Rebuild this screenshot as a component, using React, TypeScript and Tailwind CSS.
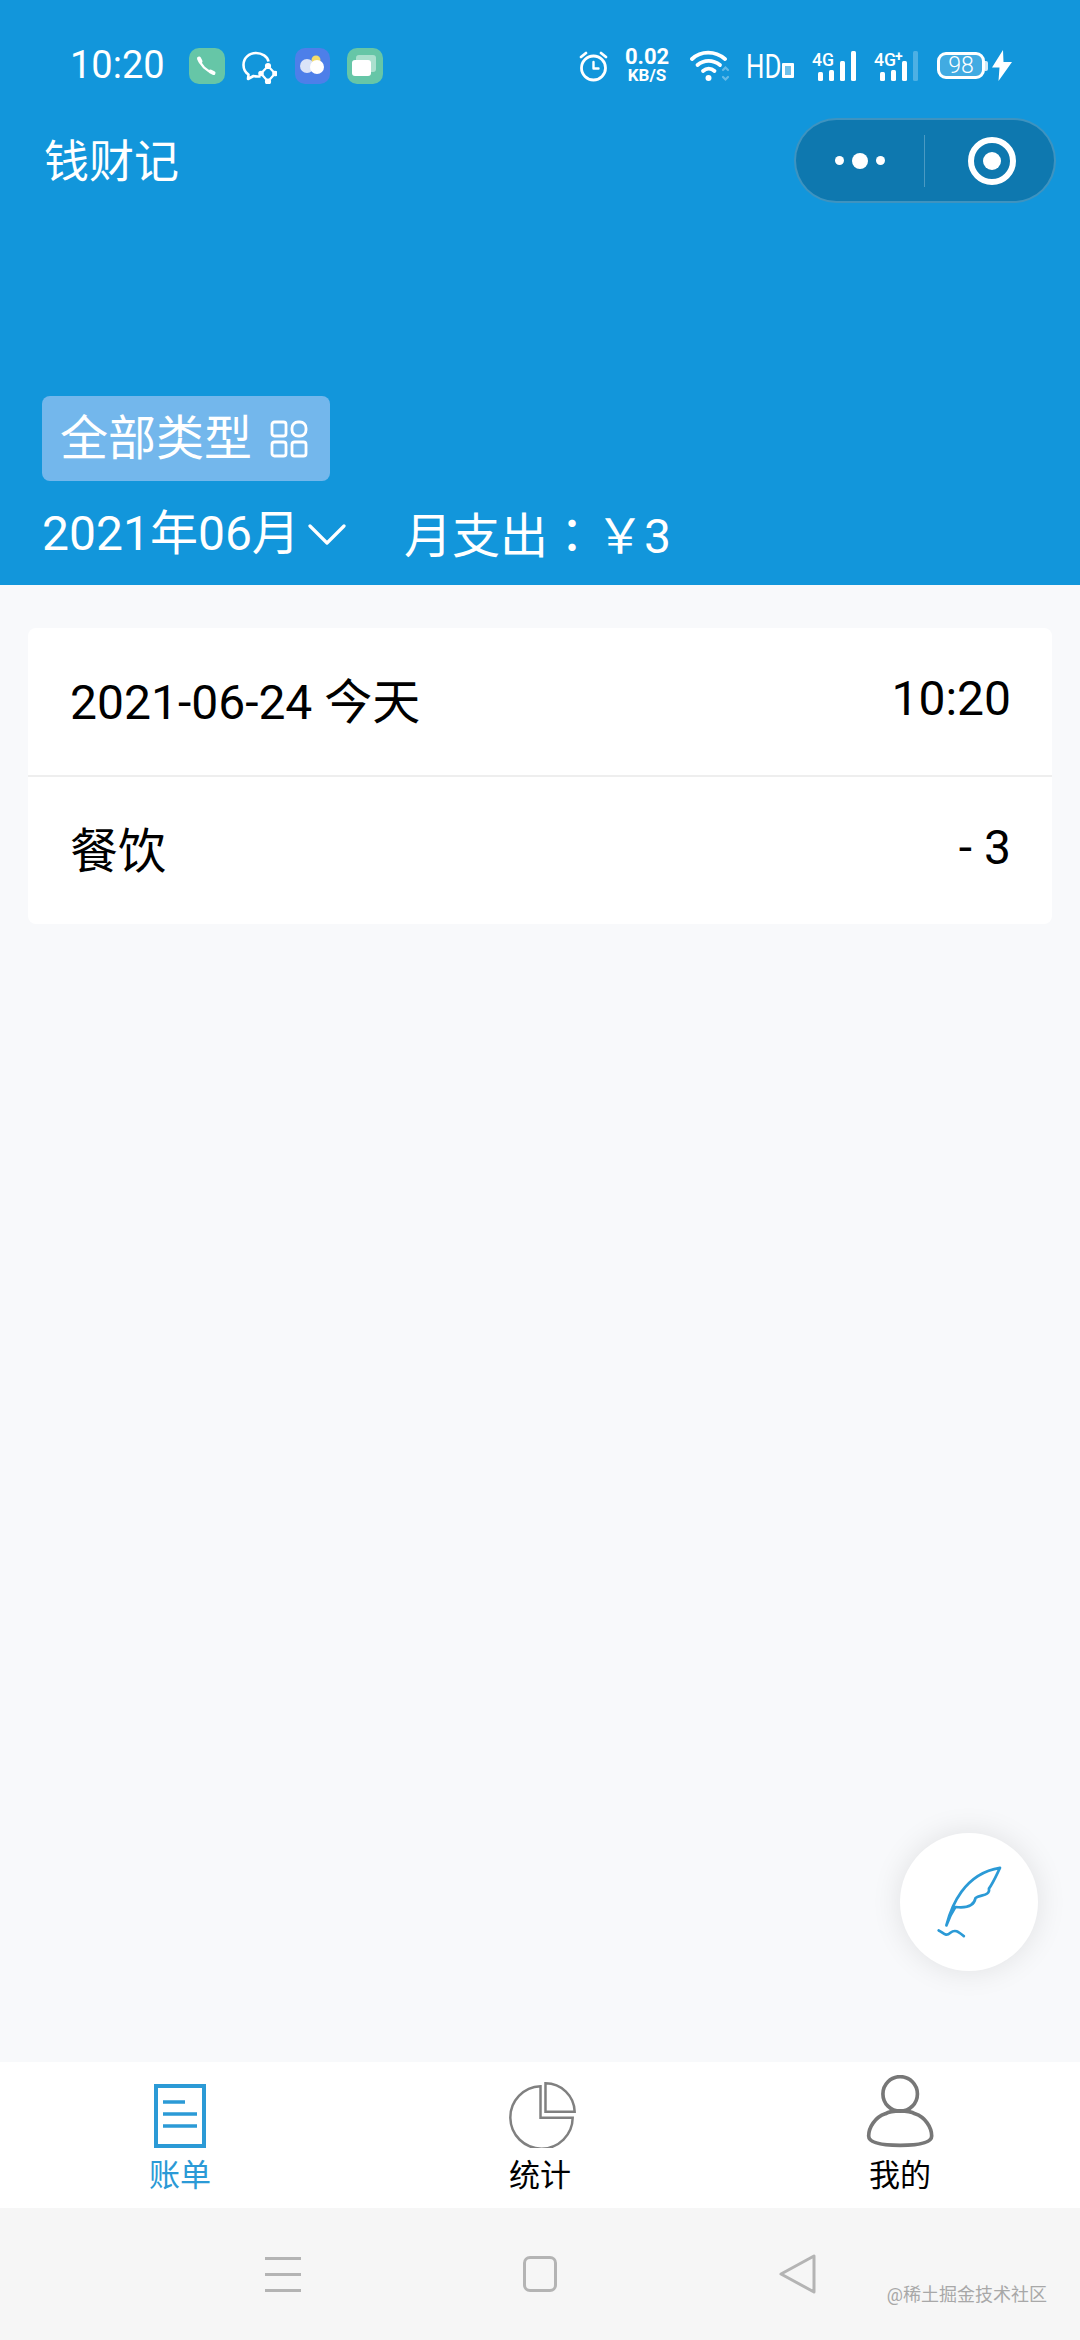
import React from "react";

function Signal({ plus }: { plus?: boolean }) {
  return (
    <svg className="-mt-[6px]" width="46" height="38" viewBox="0 -6 46 38" fill="#fff">
      <text x="0" y="16" fontSize="19" fontWeight="500" fontFamily="Roboto" textLength={22} lengthAdjust="spacingAndGlyphs">4G</text>
      {plus && <text x="21" y="11" fontSize="14" fontWeight="700" fontFamily="Roboto">+</text>}
      <rect x="6" y="22" width="5" height="9" rx="1.5" />
      <rect x="17" y="20" width="5" height="11" rx="1.5" />
      <rect x="28" y="11" width="5" height="20" rx="1.5" />
      <rect x="39" y="1" width="5" height="30" rx="1.5" fillOpacity={plus ? 0.25 : 1} />
    </svg>
  );
}

function StatusBar() {
  return (
    <div className="flex h-[35px] items-center justify-between pl-[70px] pr-[68px] mt-[48px] text-white">
      <div className="flex items-center">
        <span className="text-[38px] leading-[35px] w-[93px] font-normal">10:20</span>
        <div className="ml-[26px] w-[36px] h-[36px] rounded-[10px] bg-[#66c6a7] flex items-center justify-center">
          <svg width="36" height="36" viewBox="0 0 36 36" fill="none" stroke="#fff" strokeLinecap="round">
            <path d="M10.5 11.500C11.500 17 17 23 24 24.500" strokeWidth="2.400" />
            <path d="M10 10.500l1.500 3M21.500 23.500l3 1.500" strokeWidth="4" />
          </svg>
        </div>
        <svg className="ml-[17px]" width="35" height="36" viewBox="0 0 35 36" fill="none" stroke="#fff" strokeWidth="2.600" strokeLinejoin="round">
          <path d="M26.500 13.500C25.500 8.500 20 5 14 5 7 5 1.500 10 1.500 17c0 4 2 7.500 5 9.500L6 31l5.500-3c2 .5 4.500.7 7 .2" />
          <path d="M26 18l7 7.500-7 8-7-8z" strokeWidth="2.200" />
          <circle cx="26" cy="18" r="1.800" fill="#fff" />
          <circle cx="33" cy="25.500" r="1.500" fill="#fff" />
          <circle cx="26" cy="33.500" r="1.800" fill="#fff" />
          <circle cx="19" cy="25.500" r="1.500" fill="#fff" />
        </svg>
        <div className="ml-[18px] w-[35px] h-[36px] rounded-[10px] bg-[#4d7fe9] flex items-center justify-center">
          <svg width="35" height="36" viewBox="0 0 35 36">
            <circle cx="21" cy="12" r="4.500" fill="#f4dc6b" />
            <circle cx="12" cy="18" r="7" fill="#dbe4f8" />
            <circle cx="22" cy="19" r="7" fill="#fff" />
          </svg>
        </div>
        <div className="ml-[17px] w-[36px] h-[36px] rounded-[10px] bg-[#66c6a7] flex items-center justify-center">
          <svg width="36" height="36" viewBox="0 0 36 36" fill="#fff">
            <rect x="9" y="7" width="20" height="17" rx="3" fillOpacity="0.45" />
            <rect x="5" y="12" width="19" height="16" rx="3" />
          </svg>
        </div>
      </div>
      <div className="flex items-center">
        <svg width="29" height="32" viewBox="0 0 29 32" fill="none" stroke="#fff" strokeWidth="2.800" strokeLinecap="round" strokeLinejoin="round">
          <circle cx="14.500" cy="18" r="12" />
          <path d="M14.500 12v6.500h5" strokeWidth="2.400" />
          <path d="M2 7l5-4M27 7l-5-4" />
        </svg>
        <div className="ml-[15px] w-[48px] flex flex-col items-center font-bold">
          <span className="text-[22px] leading-[20px]">0.02</span>
          <span className="text-[17px] leading-[17px]">KB/S</span>
        </div>
        <svg className="ml-[19px]" width="40" height="34" viewBox="0 0 40 34" fill="none" stroke="#fff" strokeWidth="3.800" strokeLinecap="round">
          <path d="M2 10C11 1.500 25 1.500 35 10" />
          <path d="M7.500 16C14 10.500 23 10.500 30 16" />
          <path d="M13 22c3.500-3 8-3 11.500 0" />
          <circle cx="18.500" cy="29" r="3" fill="#fff" stroke="none" />
          <path d="M33 21l2.500-2.500L38 21M33 28l2.500 2.500L38 28" stroke="#fff" strokeOpacity="0.35" strokeWidth="2.200" />
        </svg>
        <div className="ml-[16px] flex items-end w-[48px] h-[28px]">
          <span className="text-[34px] leading-[28px] font-normal w-[36px] inline-block origin-left scale-x-[0.76] whitespace-nowrap">HD</span>
          <span className="w-[12px] h-[15px] mb-[2px] border-[3px] border-white rounded-[1px] bg-white/40" />
        </div>
        <div className="ml-[18px] flex"><Signal /></div>
        <div className="ml-[16px] flex"><Signal plus /></div>
        <div className="ml-[17px] flex items-center">
          <div className="w-[48px] h-[27px] rounded-[9px] border-[3px] border-white bg-white/20 flex items-center justify-center text-[23px] leading-none font-light">98</div>
          <span className="w-[3px] h-[10px] bg-white/80 rounded-r-[2px]" />
        </div>
        <svg className="ml-[4px]" width="20" height="31" viewBox="0 0 20 31" fill="#fff">
          <path d="M11 0L0 17.500h7.500L6.500 31 20 12h-8.500z" />
        </svg>
      </div>
    </div>
  );
}

function Capsule() {
  return (
    <div className="w-[262px] h-[85px] rounded-full bg-black/20 border-2 border-white/20 flex items-center">
      <div className="w-[128px] flex items-center justify-center gap-[8px]">
        <span className="w-[9px] h-[9px] rounded-full bg-white" />
        <span className="w-[16px] h-[16px] rounded-full bg-white" />
        <span className="w-[9px] h-[9px] rounded-full bg-white" />
      </div>
      <span className="w-px h-[52px] bg-white/25" />
      <div className="flex-1 flex items-center justify-center pl-[4px]">
        <div className="w-[48px] h-[48px] rounded-full border-[6px] border-white flex items-center justify-center">
          <span className="w-[18px] h-[18px] rounded-full bg-white" />
        </div>
      </div>
    </div>
  );
}

function Header() {
  return (
    <header className="h-[585px] bg-[#1296db] flex flex-col text-white shrink-0">
      <StatusBar />
      <div className="mt-[35px] pl-[44px] pr-[24px] flex items-center justify-between">
        <span className="text-[45px] leading-none mt-[3px]">钱财记</span>
        <Capsule />
      </div>
      <div className="mt-auto px-[42px] pb-[21px] flex flex-col items-start">
        <div className="h-[85px] w-[288px] rounded-[8px] bg-[#73b7ec] flex items-center pl-[18px]">
          <span className="text-[48px] leading-none">全部类型</span>
          <svg className="ml-[18px]" width="38" height="38" viewBox="0 0 38 38" fill="none" stroke="#fff" strokeWidth="2.800">
            <rect x="2" y="2" width="14" height="14" rx="2.500" />
            <rect x="22" y="2" width="14" height="14" rx="6" />
            <rect x="2" y="22" width="14" height="14" rx="2.500" />
            <rect x="22" y="22" width="14" height="14" rx="2.500" />
          </svg>
        </div>
        <div className="mt-[23px] h-[60px] flex items-center text-[48px] leading-none">
          <span>2021年06月</span>
          <svg className="ml-[8px]" width="38" height="23" viewBox="0 0 38 23" fill="none" stroke="#fff" strokeWidth="3.200" strokeLinecap="round" strokeLinejoin="round">
            <path d="M2 3l17 17L36 3" />
          </svg>
          <span className="ml-[58px]">
            月支出<span className="font-['Noto_Sans_CJK_TC']">：</span>￥3
          </span>
        </div>
      </div>
    </header>
  );
}

function Row({ left, right }: { left: string; right: string }) {
  return (
    <div className="h-[147px] pl-[42px] pr-[41px] flex items-center justify-between text-[48px] leading-none text-black">
      <span className="mt-[2px]">{left}</span>
      <span className="-mt-[5px]">{right}</span>
    </div>
  );
}

function Feather() {
  return (
    <svg width="67" height="74" viewBox="170 170 200 220" fill="none" stroke="#2b9ad6" strokeWidth="8" strokeLinecap="round" strokeLinejoin="round">
      <path d="M198 350C212 295 250 195 358 178C345 205 338 222 325 240C330 262 298 258 285 268C280 295 250 298 225 295C215 310 205 330 198 350Z" />
      <path d="M175 365C190 372 195 385 210 372C225 360 235 370 250 382" />
    </svg>
  );
}

function Main() {
  return (
    <main className="relative flex-1 bg-[#f8f9fb] px-[28px] pt-[43px]">
      <section className="bg-white rounded-[8px] overflow-hidden">
        <Row left="2021-06-24 今天" right="10:20" />
        <div className="h-[2px] bg-[#eeeeee]" />
        <Row left="餐饮" right="- 3" />
      </section>
      <button className="absolute right-[42px] top-[1248px] w-[138px] h-[138px] rounded-full bg-white shadow-[0_0_30px_rgba(0,0,0,0.1)] flex items-center justify-center">
        <span className="flex translate-x-[1px]">
          <Feather />
        </span>
      </button>
    </main>
  );
}

function Tab({ label, active, children }: { label: string; active?: boolean; children: React.ReactNode }) {
  return (
    <div className="flex-1 flex flex-col items-center pt-[15px]">
      <div className="h-[71px] flex items-end justify-center">{children}</div>
      <span className={active ? "mt-[8px] text-[31px] leading-[40px] text-[#2b9ad6]" : "mt-[8px] text-[31px] leading-[40px] text-black"}>{label}</span>
    </div>
  );
}

function TabBar() {
  return (
    <nav className="h-[146px] bg-white flex shrink-0">
      <Tab label="账单" active>
        <svg width="52" height="64" viewBox="0 0 52 64" fill="none" stroke="#2b9ad6" strokeWidth="4">
          <rect x="2" y="2" width="48" height="60" />
          <path d="M9 18h22M9 30h34M9 42h34" strokeWidth="3.400" />
        </svg>
      </Tab>
      <Tab label="统计">
        <svg className="translate-x-[3px]" width="68" height="67" viewBox="80 60 205 200" fill="none" stroke="#808080" strokeWidth="7.500">
          <path d="M175 75V170H272A94 94 0 1 1 175 75Z" />
          <path d="M190 66A88 88 0 0 1 278 152H190Z" />
        </svg>
      </Tab>
      <Tab label="我的">
        <svg className="translate-x-[1px]" width="72" height="73" viewBox="1155 48 215 220" fill="none" stroke="#777777" strokeWidth="11">
          <circle cx="1260" cy="105" r="52" />
          <path d="M1215 165C1185 175 1165 205 1165 232C1165 255 1210 260 1260 260C1310 260 1355 255 1355 232C1355 205 1335 175 1305 165C1285 153 1235 153 1215 165Z" />
        </svg>
      </Tab>
    </nav>
  );
}

function SystemNav() {
  return (
    <div className="relative h-[132px] bg-[#f6f6f6] flex items-center justify-center gap-[222px] shrink-0">
      <div className="w-[36px] flex flex-col gap-[13px]">
        <span className="h-[3px] bg-[#b4b4b4]" />
        <span className="h-[3px] bg-[#b4b4b4]" />
        <span className="h-[3px] bg-[#b4b4b4]" />
      </div>
      <span className="w-[34px] h-[36px] rounded-[7px] border-[3px] border-[#b4b4b4]" />
      <svg width="37" height="40" viewBox="0 0 37 40" fill="none" stroke="#b4b4b4" strokeWidth="3" strokeLinejoin="round">
        <path d="M2 20L35 2V38Z" />
      </svg>
      <span className="absolute right-[33px] top-[73px] text-[18px] leading-[28px] text-[#a8a8a8]">@稀土掘金技术社区</span>
    </div>
  );
}

export default function App() {
  return (
    <div className="w-[1080px] h-[2340px] flex flex-col overflow-hidden font-[Roboto,'Noto_Sans_CJK_SC',sans-serif]">
      <Header />
      <Main />
      <TabBar />
      <SystemNav />
    </div>
  );
}
